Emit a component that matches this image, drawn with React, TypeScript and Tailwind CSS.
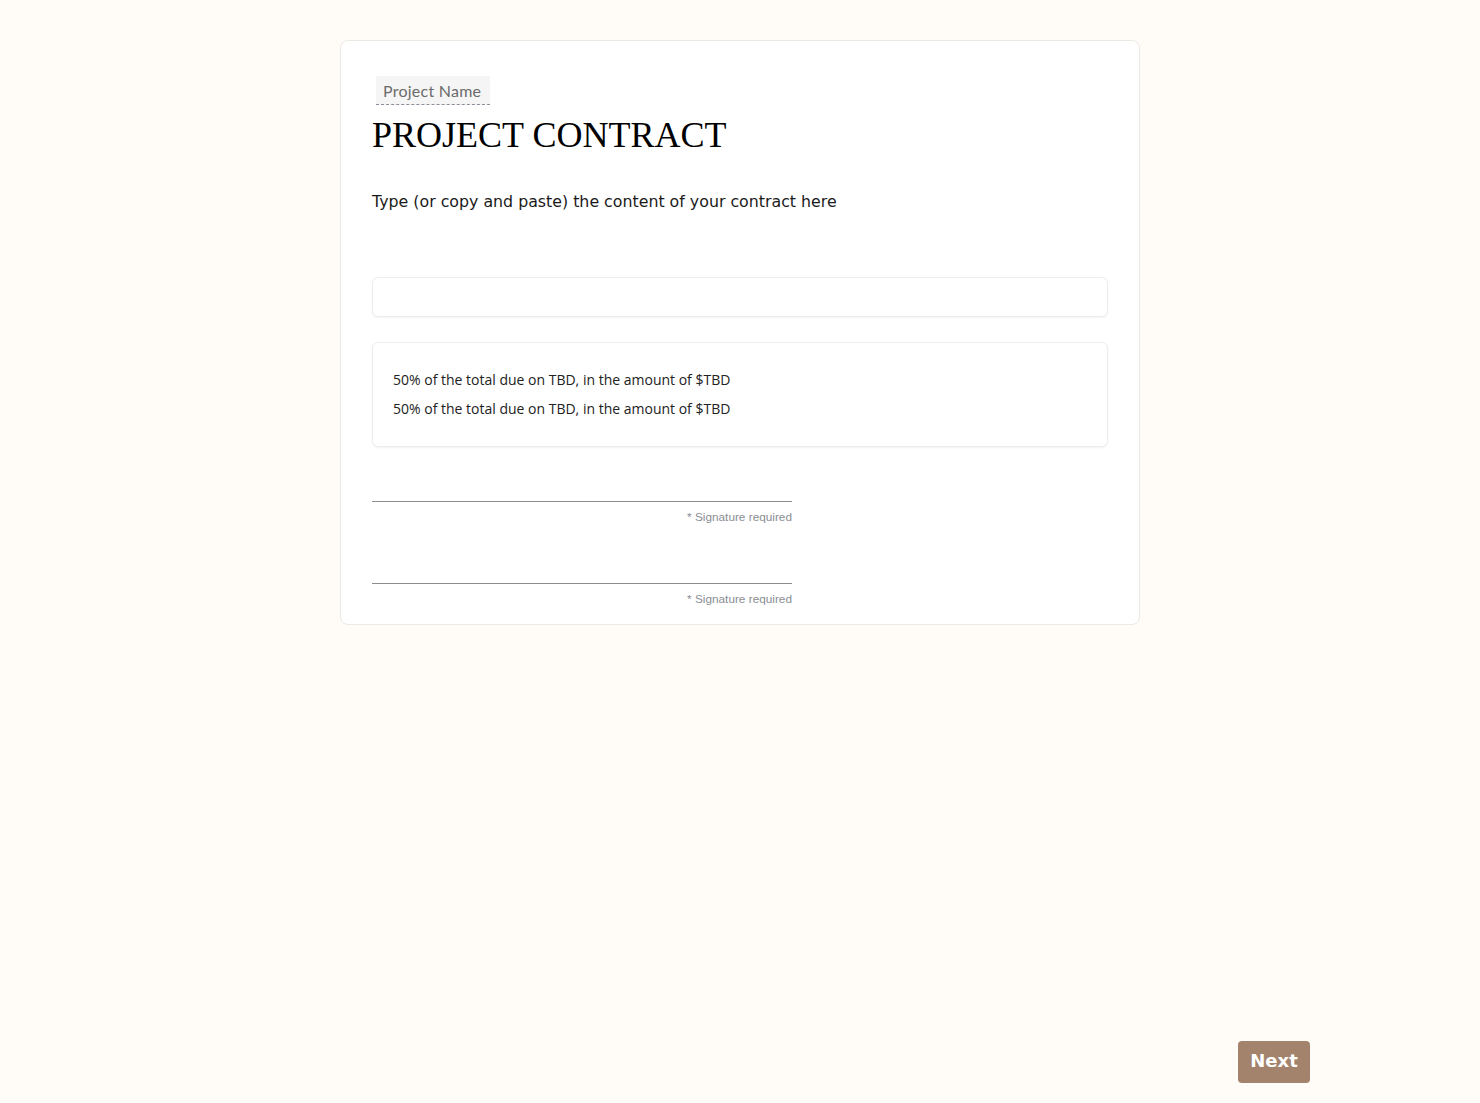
export default function App() {
	return (
		<div className="min-h-[1103px] bg-[#fffcf7] relative font-['Liberation_Sans',sans-serif]">
			<div className="pt-10 flex justify-center">
				{/* contract card */}
				<div className="w-[800px] bg-white border border-[#ece9e4] rounded-lg px-[31px] pt-[35px] pb-[18px]">
					<div className="pl-1">
						<span className="inline-block bg-[#f5f5f5] border-b border-dashed border-[#8a8f99] pl-[7px] pr-[9px] h-[29px] leading-[29px] text-[16px] tracking-[0.25px] text-[#6b6b6b] font-['Lato',sans-serif]">
							Project Name
						</span>
					</div>
					<h1 className="mt-[10px] text-[36px] leading-[40px] text-black font-['Liberation_Serif',serif]">
						PROJECT CONTRACT
					</h1>
					<p className="mt-[35px] text-[15.8px] leading-[24px] text-[#1a1a1a] font-['DejaVu_Sans',sans-serif]">
						Type (or copy and paste) the content of your contract here
					</p>
					<div className="mt-[63px] h-[40px] rounded-md bg-white border border-[#ededed] shadow-[0_1px_2px_rgba(0,0,0,0.05)]"></div>
					<div className="mt-[25px] rounded-md bg-white border border-[#ededed] shadow-[0_1px_2px_rgba(0,0,0,0.05)] px-5 pt-[22px] pb-[23px] text-[14px] leading-[29px] text-[#222] font-['Open_Sans',sans-serif]">
						<p>50% of the total due on TBD, in the amount of $TBD</p>
						<p>50% of the total due on TBD, in the amount of $TBD</p>
					</div>
					<div className="w-[420px] mt-[54px]">
						<div className="border-b border-[#8c8c8c]"></div>
						<p className="mt-[8px] text-right text-[11.8px] leading-[14px] text-[#8a8d94]">* Signature required</p>
					</div>
					<div className="w-[420px] mt-[59px]">
						<div className="border-b border-[#8c8c8c]"></div>
						<p className="mt-[8px] text-right text-[11.8px] leading-[14px] text-[#8a8d94]">* Signature required</p>
					</div>
				</div>
			</div>
			<button className="absolute left-[1238px] top-[1041px] w-[72px] h-[42px] rounded bg-[#a4836c] text-white text-[18px] leading-[40px] pb-1 font-bold font-['DejaVu_Sans',sans-serif]">
				Next
			</button>
		</div>
	);
}
